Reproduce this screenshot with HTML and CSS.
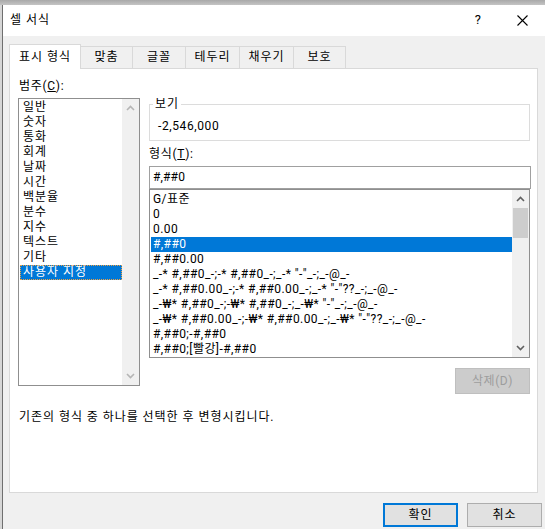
FILE: index.html
```html
<!DOCTYPE html>
<html lang="ko">
<head>
<meta charset="utf-8">
<title>셀 서식</title>
<link rel="stylesheet" href="styles.css">
</head>
<body>
<div class="window">
  <div class="titlebar">
    <span class="title">셀 서식</span>
    <span class="help">?</span>
    <svg class="close" width="11" height="11" viewBox="0 0 11 11"><path d="M0.5 0.5L10.5 10.5M10.5 0.5L0.5 10.5" stroke="#000" stroke-width="1.1" fill="none"/></svg>
  </div>
  <div class="body">
    <div class="tabs">
      <div class="tab active">표시 형식</div>
      <div class="tab w52">맞춤</div>
      <div class="tab w53">글꼴</div>
      <div class="tab w54">테두리</div>
      <div class="tab w54">채우기</div>
      <div class="tab w52">보호</div>
    </div>
    <div class="panel">
      <div class="cat-label">범주(<u>C</u>):</div>
      <div class="main">
        <div class="catlist">
          <div class="items">
            <div class="item">일반</div>
            <div class="item">숫자</div>
            <div class="item">통화</div>
            <div class="item">회계</div>
            <div class="item">날짜</div>
            <div class="item">시간</div>
            <div class="item">백분율</div>
            <div class="item">분수</div>
            <div class="item">지수</div>
            <div class="item">텍스트</div>
            <div class="item">기타</div>
            <div class="item sel focus">사용자 지정</div>
          </div>
          <div class="scroll light">
            <svg class="arrow" width="9" height="6" viewBox="0 0 9 6"><path d="M1 5L4.5 1.5L8 5" stroke="currentColor" stroke-width="1.6" fill="none"/></svg>
            <div class="track"></div>
            <svg class="arrow" width="9" height="6" viewBox="0 0 9 6"><path d="M1 1L4.5 4.5L8 1" stroke="currentColor" stroke-width="1.6" fill="none"/></svg>
          </div>
        </div>
        <div class="right">
          <fieldset class="preview">
            <legend>보기</legend>
            <div class="pvalue">-2,546,000</div>
          </fieldset>
          <div class="fmt-label">형식(<u>T</u>):</div>
          <div class="input">#,##0</div>
          <div class="fmtlist">
            <div class="items">
              <div class="item">G/표준</div>
              <div class="item">0</div>
              <div class="item">0.00</div>
              <div class="item sel">#,##0</div>
              <div class="item">#,##0.00</div>
              <div class="item">_-* #,##0_-;-* #,##0_-;_-* "-"_-;_-@_-</div>
              <div class="item">_-* #,##0.00_-;-* #,##0.00_-;_-* "-"??_-;_-@_-</div>
              <div class="item">_-₩* #,##0_-;-₩* #,##0_-;_-₩* "-"_-;_-@_-</div>
              <div class="item">_-₩* #,##0.00_-;-₩* #,##0.00_-;_-₩* "-"??_-;_-@_-</div>
              <div class="item">#,##0;-#,##0</div>
              <div class="item">#,##0;[빨강]-#,##0</div>
            </div>
            <div class="scroll">
              <svg class="arrow" width="9" height="6" viewBox="0 0 9 6"><path d="M1 5L4.5 1.5L8 5" stroke="currentColor" stroke-width="1.6" fill="none"/></svg>
              <div class="track"><div class="thumb"></div></div>
              <svg class="arrow" width="9" height="6" viewBox="0 0 9 6"><path d="M1 1L4.5 4.5L8 1" stroke="currentColor" stroke-width="1.6" fill="none"/></svg>
            </div>
          </div>
          <div class="delrow"><div class="btn disabled">삭제(D)</div></div>
        </div>
      </div>
      <div class="desc">기존의 형식 중 하나를 선택한 후 변형시킵니다.</div>
    </div>
    <div class="buttons">
      <div class="btn primary">확인</div>
      <div class="btn">취소</div>
    </div>
  </div>
</div>
</body>
</html>
```
FILE: styles.css
```css
html, body {
  margin: 0;
  padding: 0;
}
body {
  width: 545px;
  height: 529px;
  overflow: hidden;
  background: #d6d6d6;
  background-image: linear-gradient(#a9a9a9, #c4c4c4 5px, #d6d6d6 5px);
  font-family: Roboto, "Noto Sans CJK KR", sans-serif;
  font-size: 12px;
  letter-spacing: 0.15px;
  color: #000;
}
.window {
  margin: 5px 0 0 2px;
  border-left: 1px solid #6f6f6f;
  height: 524px;
  background: #f0f0f0;
  display: flex;
  flex-direction: column;
}
.titlebar {
  height: 31px;
  background: #fff;
  display: flex;
  align-items: center;
  padding-left: 7px;
  flex-shrink: 0;
}
.title {
  flex: 1;
  line-height: 15px;
  padding-bottom: 1px;
  letter-spacing: 0.95px;
}
.help {
  font-size: 13px;
  width: 12px;
  text-align: center;
  margin-right: 33px;
  padding-bottom: 2px;
}
.close {
  margin-right: 17px;
  margin-bottom: 1px;
}
.body {
  padding: 8px 0 0 6px;
  display: flex;
  flex-direction: column;
}
.tabs {
  display: flex;
  align-items: flex-end;
  height: 24px;
  position: relative;
  z-index: 1;
}
.tab {
  line-height: 20px;
  text-align: center;
  border: 1px solid #d9d9d9;
  border-bottom: none;
  border-left: none;
  background: #f0f0f0;
  box-sizing: border-box;
  height: 22px;
  letter-spacing: 0.95px;
}
.tab.active {
  width: 72px;
  height: 25px;
  line-height: 24px;
  background: #fff;
  border-left: 1px solid #d9d9d9;
  margin-bottom: -1px;
}
.w52 { width: 52px; }
.w53 { width: 53px; }
.w54 { width: 54px; }
.panel {
  width: 529px;
  height: 425px;
  box-sizing: border-box;
  background: #fff;
  border: 1px solid #d9d9d9;
  padding: 10px 6px 0 8px;
  display: flex;
  flex-direction: column;
}
.cat-label {
  line-height: 15px;
  padding-left: 1px;
  letter-spacing: 0.7px;
}
.main {
  display: flex;
  margin-top: 4px;
  gap: 9px;
}
.catlist {
  width: 122px;
  height: 288px;
  box-sizing: border-box;
  border: 1px solid #8f8f8f;
  display: flex;
}
.items {
  flex: 1;
  padding: 1px 0 0 1px;
  line-height: 15px;
  white-space: nowrap;
  overflow: hidden;
}
.catlist .items {
  letter-spacing: 0.95px;
}
.item {
  height: 15px;
  padding-left: 3px;
}
.item.sel {
  background: #0078d7;
  color: #fff;
}
.item.focus {
  outline: 1px dotted #f0a040;
  outline-offset: -1px;
}
.scroll {
  width: 17px;
  background: #f0f0f0;
  display: flex;
  flex-direction: column;
  align-items: center;
  color: #606060;
}
.scroll.light {
  color: #b5b5b5;
}
.arrow {
  flex-shrink: 0;
  margin: 6px 0 6px;
}
.track {
  flex: 1;
  width: 100%;
  display: flex;
  justify-content: center;
}
.thumb {
  width: 15px;
  height: 30px;
  background: #cdcdcd;
}
.right {
  width: 381px;
  display: flex;
  flex-direction: column;
}
.preview {
  margin: -1px 0 0 0;
  padding: 7px 0 6px 3px;
  border: 1px solid #dcdcdc;
  min-width: 0;
}
.preview legend {
  padding: 0 2px;
  line-height: 15px;
  letter-spacing: 0.95px;
}
.pvalue {
  line-height: 15px;
  padding-left: 5px;
  letter-spacing: 0.6px;
}
.fmt-label {
  margin-top: 6px;
  line-height: 15px;
  letter-spacing: 0.7px;
}
.input {
  margin-top: 4px;
  height: 23px;
  box-sizing: border-box;
  border: 1px solid #a0a0a0;
  line-height: 21px;
  padding-left: 3px;
  width: 382px;
}
.fmtlist {
  height: 169px;
  box-sizing: border-box;
  border: 1px solid #8f8f8f;
  display: flex;
}
.fmtlist .items {
  padding: 2px 0 0 1px;
  letter-spacing: 0.42px;
}
.fmtlist .item {
  padding-left: 2px;
}
.delrow {
  display: flex;
  justify-content: flex-end;
  margin-top: 10px;
}
.btn {
  width: 75px;
  height: 24px;
  box-sizing: border-box;
  border: 1px solid #adadad;
  background: #e1e1e1;
  text-align: center;
  line-height: 22px;
  letter-spacing: 0.95px;
}
.btn.disabled {
  height: 26px;
  line-height: 24px;
  background: #cccccc;
  border-color: #bfbfbf;
  color: #9d9d9d;
  letter-spacing: 0.6px;
}
.btn.primary {
  border: 2px solid #0078d7;
  line-height: 20px;
}
.desc {
  margin-top: 16px;
  line-height: 15px;
  padding-left: 1px;
  letter-spacing: 0.95px;
}
.buttons {
  display: flex;
  justify-content: flex-end;
  gap: 9px;
  margin-top: 10px;
  padding-right: 3px;
}
```
